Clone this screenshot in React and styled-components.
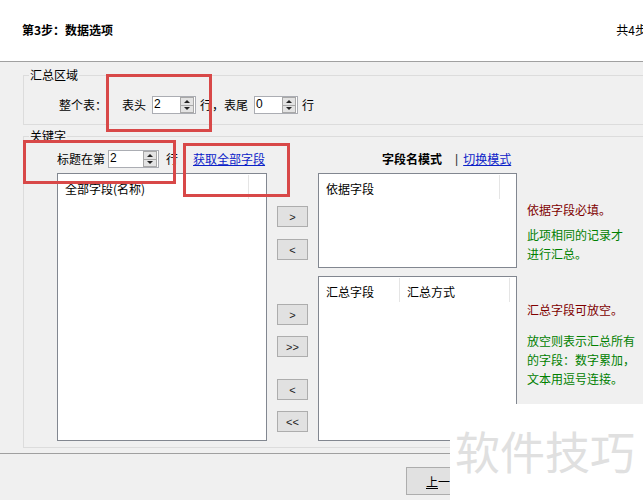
import styled, { createGlobalStyle } from "styled-components";

const GlobalStyle = createGlobalStyle`
  body {
    margin: 0;
    background: #f0f0f0;
    font-family: "Noto Sans CJK SC", "Noto Sans", sans-serif;
    font-size: 12px;
    color: #000;
  }
`;

export default function App() {
  return (
    <>
      <GlobalStyle />
      <Frame>
        <Inner>
          <Header>
            <Title>第3步：数据选项</Title>
            <StepCount>共4步</StepCount>
          </Header>

          <Group $mt={5} $pb={10}>
            <Legend>汇总区域</Legend>
            <Row $mt={13} $pl={30}>
              <Text>整个表：</Text>
              <Text $ml={15}>表头</Text>
              <SpinBox value="2" width={44} ml={6} />
              <Text $ml={4}>行，表尾</Text>
              <SpinBox value="0" width={44} ml={6} />
              <Text $ml={4}>行</Text>
            </Row>
          </Group>

          <Group $mt={3} $pb={6}>
            <Legend>关键字</Legend>
            <Row $mt={6} $pl={28}>
              <Text>标题在第</Text>
              <SpinBox value="2" width={51} ml={3} />
              <Text $ml={7}>行</Text>
              <Link $ml={15}>获取全部字段</Link>
              <Bold $ml={117}>字段名模式</Bold>
              <Sep>|</Sep>
              <Link>切换模式</Link>
            </Row>

            <FieldGrid>
              <ListBox $span>
                <ListHead>
                  <HeadCol $w={191}>全部字段(名称)</HeadCol>
                </ListHead>
              </ListBox>

              <ButtonCol>
                <SmallButton $mt={33}>&gt;</SmallButton>
                <SmallButton $mt={12}>&lt;</SmallButton>
                <SmallButton $mt={44}>&gt;</SmallButton>
                <SmallButton $mt={11}>&gt;&gt;</SmallButton>
                <SmallButton $mt={22}>&lt;</SmallButton>
                <SmallButton $mt={11}>&lt;&lt;</SmallButton>
              </ButtonCol>

              <ListBox>
                <ListHead>
                  <HeadCol $w={181}>依据字段</HeadCol>
                </ListHead>
              </ListBox>

              <Notes $pt={27}>
                <Note $color="#800000">依据字段必填。</Note>
                <Note $color="#008000" $mt={6}>
                  此项相同的记录才
                  <br />
                  进行汇总。
                </Note>
              </Notes>

              <ListBox>
                <ListHead>
                  <HeadCol $w={81}>汇总字段</HeadCol>
                  <HeadCol $w={110}>汇总方式</HeadCol>
                </ListHead>
              </ListBox>

              <Notes $pt={24}>
                <Note $color="#800000">汇总字段可放空。</Note>
                <Note $color="#008000" $mt={12}>
                  放空则表示汇总所有
                  <br />
                  的字段：数字累加，
                  <br />
                  文本用逗号连接。
                </Note>
              </Notes>
            </FieldGrid>
          </Group>

          <Footer>
            <NavButton>
              <u>上</u>一
            </NavButton>
          </Footer>
        </Inner>

        <Mark $x={106} $y={74} $w={106} $h={58} />
        <Mark $x={23} $y={140} $w={153} $h={44} />
        <Mark $x={183} $y={143} $w={107} $h={54} />

        <Watermark>软件技巧</Watermark>
      </Frame>
    </>
  );
}

function SpinBox({ value, width, ml }) {
  return (
    <Spin $w={width} $ml={ml}>
      <SpinValue>{value}</SpinValue>
      <Spinner>
        <SpinHalf>
          <Arrow $up />
        </SpinHalf>
        <SpinHalf $bottom>
          <Arrow />
        </SpinHalf>
      </Spinner>
    </Spin>
  );
}

const Frame = styled.div`
  position: relative;
  width: 643px;
  height: 500px;
  overflow: hidden;
`;

const Inner = styled.div`
  width: 680px;
`;

const Header = styled.header`
  height: 62px;
  box-sizing: border-box;
  background: #fff;
  border-bottom: 1px solid #a0a0a0;
  display: flex;
  align-items: center;
  justify-content: space-between;
  padding: 0 33px 3px 22px;
`;

const Title = styled.div`
  font-weight: 700;
  font-size: 12px;
`;

const StepCount = styled.div`
  font-size: 12px;
`;

const Group = styled.fieldset`
  margin: ${(p) => p.$mt}px 0 0 23px;
  padding: 0 0 ${(p) => p.$pb}px 5px;
  border: 1px solid #dcdcdc;
  min-width: 0;
`;

const Legend = styled.legend`
  padding: 0 1px;
  line-height: 16px;
  font-size: 12px;
`;

const Row = styled.div`
  display: flex;
  align-items: center;
  height: 18px;
  margin-top: ${(p) => p.$mt}px;
  padding-left: ${(p) => p.$pl}px;
  white-space: nowrap;
`;

const Text = styled.span`
  margin-left: ${(p) => p.$ml || 0}px;
  line-height: 18px;
`;

const Bold = styled(Text)`
  font-weight: 700;
`;

const Sep = styled.span`
  margin: 0 5px 0 13px;
  color: #333;
  font-family: "Liberation Sans", sans-serif;
  font-size: 12px;
`;

const Link = styled.span`
  margin-left: ${(p) => p.$ml || 0}px;
  color: #0b22c8;
  text-decoration: underline;
  line-height: 18px;
  cursor: pointer;
`;

const Spin = styled.div`
  display: flex;
  box-sizing: border-box;
  width: ${(p) => p.$w}px;
  height: 18px;
  margin-left: ${(p) => p.$ml}px;
  background: #fff;
  border: 1px solid #abadb3;
`;

const SpinValue = styled.span`
  flex: 1;
  padding-left: 1px;
  line-height: 15px;
  font-family: "Liberation Sans", sans-serif;
  font-size: 12px;
`;

const Spinner = styled.div`
  width: 14px;
  margin: 0 1px 0 0;
  display: flex;
  flex-direction: column;
  box-sizing: border-box;
  border: 1px solid #a8a8a8;
  background: #e3e3e3;
`;

const SpinHalf = styled.div`
  flex: 1;
  display: flex;
  align-items: center;
  justify-content: center;
  border-top: ${(p) => (p.$bottom ? "1px solid #a8a8a8" : "none")};
`;

const Arrow = styled.span`
  width: 0;
  height: 0;
  border-left: 3px solid transparent;
  border-right: 3px solid transparent;
  ${(p) =>
    p.$up ? "border-bottom: 3px solid #222;" : "border-top: 3px solid #222;"}
`;

const FieldGrid = styled.div`
  display: grid;
  grid-template-columns: 210px 31px 199px 1fr;
  grid-template-rows: 95px 165px;
  column-gap: 10px;
  row-gap: 8px;
  margin-top: 5px;
  padding-left: 28px;
`;

const ListBox = styled.div`
  grid-row: ${(p) => (p.$span ? "1 / span 2" : "auto")};
  box-sizing: border-box;
  background: #fff;
  border: 1px solid #828790;
`;

const ListHead = styled.div`
  display: flex;
  height: 24px;
  margin-top: 1px;
`;

const HeadCol = styled.div`
  width: ${(p) => p.$w}px;
  box-sizing: border-box;
  padding: 2px 0 0 7px;
  border-right: 1px solid #e5e5e5;
  line-height: 24px;
  white-space: nowrap;
`;

const ButtonCol = styled.div`
  grid-row: 1 / span 2;
  display: flex;
  flex-direction: column;
`;

const SmallButton = styled.button`
  width: 31px;
  height: 21px;
  margin-top: ${(p) => p.$mt}px;
  padding: 0;
  background: #e1e1e1;
  border: 1px solid #adadad;
  border-radius: 0;
  font-family: "Liberation Sans", sans-serif;
  font-size: 11px;
  color: #222;
`;

const Notes = styled.div`
  padding-top: ${(p) => p.$pt}px;
  white-space: nowrap;
`;

const Note = styled.p`
  margin: ${(p) => p.$mt || 0}px 0 0;
  color: ${(p) => p.$color};
  line-height: 19px;
`;

const Footer = styled.footer`
  display: flex;
  margin-top: 5px;
  border-top: 1px solid #a0a0a0;
  padding: 13px 0 0 406px;
`;

const NavButton = styled.button`
  width: 75px;
  height: 28px;
  padding: 0 0 0 19px;
  text-align: left;
  background: #e1e1e1;
  border: 1px solid #adadad;
  border-radius: 0;
  font-family: "Noto Sans CJK SC", sans-serif;
  font-size: 12px;
  color: #000;
`;

const Mark = styled.div`
  position: absolute;
  left: ${(p) => p.$x}px;
  top: ${(p) => p.$y}px;
  width: ${(p) => p.$w}px;
  height: ${(p) => p.$h}px;
  box-sizing: border-box;
  border: 3px solid #d84848;
  pointer-events: none;
`;

const Watermark = styled.div`
  position: absolute;
  left: 450px;
  top: 404px;
  width: 193px;
  height: 96px;
  box-sizing: border-box;
  padding-left: 5px;
  background: #fff;
  color: #e0e0e0;
  font-family: "Noto Sans CJK SC", sans-serif;
  font-size: 45px;
  line-height: 94px;
  white-space: nowrap;
`;
